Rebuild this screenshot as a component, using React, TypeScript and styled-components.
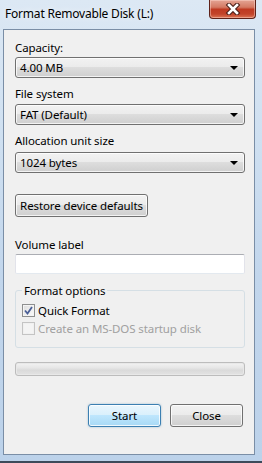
import React from "react";
import styled, { createGlobalStyle, css } from "styled-components";

const Global = createGlobalStyle`
  html, body { margin: 0; padding: 0; background: #ffffff; }
  body { font-family: "Noto Sans", "Open Sans", sans-serif; font-size: 11.5px; letter-spacing: -0.1px; color: #000; }
  * { box-sizing: border-box; }
`;

const Frame = styled.div`
  width: 262px;
  height: 463px;
  display: flex;
  flex-direction: column;
  background: linear-gradient(180deg, #dce8f4 0%, #cfe0f1 30%, #c2d6ec 60%, #bcd2ea 100%);
  border-bottom: 2px solid #3d4a5a;
  padding: 0 7px 6px 3px;
`;

const TitleBar = styled.div`
  height: 29px;
  display: flex;
  align-items: flex-start;
  justify-content: space-between;
`;

const Title = styled.div`
  padding: 6px 0 0 2px;
  font-size: 12px;
  letter-spacing: -0.2px;
  line-height: 16px;
  color: #000;
  text-shadow: 0 0 6px rgba(255,255,255,0.9);
`;

const CloseBtn = styled.div`
  width: 47px;
  height: 19px;
  margin-right: -1px;
  border: 1px solid #5e2219;
  border-top: none;
  border-radius: 0 0 4px 4px;
  background: linear-gradient(180deg, #e4a494 0%, #d47a64 40%, #bf3a22 52%, #c2442a 78%, #dc7555 100%);
  box-shadow: inset 0 0 0 1px rgba(255,220,210,0.45);
  display: flex;
  align-items: center;
  justify-content: center;
`;

const Client = styled.div`
  flex: 1;
  background: #f0f0f0;
  border: 1px solid #7a8ea6;
  display: flex;
  flex-direction: column;
  padding: 0 0 0 11px;
`;

const Label = styled.div<{ $top: number }>`
  margin-top: ${(p) => p.$top}px;
  height: 15px;
  line-height: 15px;
  color: #000;
  white-space: nowrap;
`;

const buttonFace = css`
  border: 1px solid #707070;
  border-radius: 3px;
  background: linear-gradient(180deg, #f2f2f2 0%, #ebebeb 49%, #dddddd 50%, #cfcfcf 100%);
  box-shadow: inset 0 0 0 1px rgba(255,255,255,0.75);
`;

const Combo = styled.div<{ $top: number }>`
  ${buttonFace}
  margin-top: ${(p) => p.$top}px;
  width: 230px;
  height: 21px;
  display: flex;
  align-items: center;
  justify-content: space-between;
  padding: 0 6px 0 4px;
  line-height: 15px;
`;

const Arrow = styled.span`
  width: 0;
  height: 0;
  border-left: 4px solid transparent;
  border-right: 4px solid transparent;
  border-top: 4px solid #000;
  margin-top: 1px;
`;

const Button = styled.div<{ $top?: number; $width: number; $default?: boolean }>`
  ${buttonFace}
  margin-top: ${(p) => p.$top ?? 0}px;
  width: ${(p) => p.$width}px;
  height: 23px;
  display: flex;
  align-items: center;
  justify-content: center;
  line-height: 15px;
  white-space: nowrap;
  ${(p) =>
    p.$default &&
    css`
      border-color: #3c7fb1;
      background: linear-gradient(180deg, #eaf6fd 0%, #d9f0fc 49%, #bee6fd 50%, #a7d9f5 100%);
      box-shadow: inset 0 0 0 1px rgba(255,255,255,0.8), 0 0 2px rgba(60,127,177,0.5);
    `}
`;

const TextInput = styled.div<{ $top: number }>`
  margin-top: ${(p) => p.$top}px;
  width: 230px;
  height: 20px;
  background: #fff;
  border: 1px solid #abadb3;
  border-left-color: #e2e3ea;
  border-right-color: #e2e3ea;
  border-bottom-color: #e3e9ef;
  border-radius: 2px;
`;

const Group = styled.fieldset`
  margin: 9px 0 0 0;
  width: 230px;
  height: 65px;
  border: 1px solid #d5dfe5;
  border-radius: 3px;
  padding: 0 0 0 6px;
  display: flex;
  flex-direction: column;
`;

const Legend = styled.legend`
  padding: 0 2px;
  line-height: 15px;
`;

const CheckRow = styled.div<{ $disabled?: boolean; $top: number }>`
  margin-top: ${(p) => p.$top}px;
  display: flex;
  align-items: center;
  gap: 3px;
  height: 15px;
  color: ${(p) => (p.$disabled ? "#a0a0a0" : "#000")};
`;

const Box = styled.span<{ $disabled?: boolean }>`
  width: 13px;
  height: 13px;
  border: 1px solid ${(p) => (p.$disabled ? "#c4c4c4" : "#8e8f8f")};
  background: ${(p) =>
    p.$disabled
      ? "#f4f4f4"
      : "linear-gradient(135deg, #dcdcdc 0%, #f0f0f0 60%, #fbfbfb 100%)"};
  box-shadow: inset 0 0 0 1px ${(p) => (p.$disabled ? "#f0f0f0" : "#f4f4f4")};
  display: flex;
  align-items: center;
  justify-content: center;
`;

const Progress = styled.div`
  margin-top: 14px;
  width: 230px;
  height: 14px;
  border: 1px solid #bcbcbc;
  border-radius: 3px;
  background: linear-gradient(180deg, #f3f3f3 0%, #e6e6e6 40%, #dadada 60%, #e3e3e3 100%);
  box-shadow: inset 0 0 0 1px #e8e8e8;
`;

const ButtonRow = styled.div`
  margin-top: 28px;
  width: 228px;
  display: flex;
  justify-content: flex-end;
  gap: 9px;
`;

export default function App() {
  return (
    <>
      <Global />
      <Frame>
        <TitleBar>
          <Title>Format Removable Disk (L:)</Title>
          <CloseBtn>
            <svg width="16" height="12" viewBox="0 0 16 12">
              <path
                d="M4 2 L12 10 M12 2 L4 10"
                stroke="#4a1e18"
                strokeWidth="4.6"
                strokeLinecap="square"
              />
              <path
                d="M4 2 L12 10 M12 2 L4 10"
                stroke="#ffffff"
                strokeWidth="2.6"
                strokeLinecap="square"
              />
            </svg>
          </CloseBtn>
        </TitleBar>
        <Client>
          <Label $top={10}>Capacity:</Label>
          <Combo $top={2}>
            <span>4.00 MB</span>
            <Arrow />
          </Combo>
          <Label $top={8}>File system</Label>
          <Combo $top={3}>
            <span>FAT (Default)</span>
            <Arrow />
          </Combo>
          <Label $top={8}>Allocation unit size</Label>
          <Combo $top={4}>
            <span>1024 bytes</span>
            <Arrow />
          </Combo>
          <Button $top={21} $width={133}>
            Restore device defaults
          </Button>
          <Label $top={20}>Volume label</Label>
          <TextInput $top={2} />
          <Group>
            <Legend>Format options</Legend>
            <CheckRow $top={5}>
              <Box>
                <svg width="9" height="9" viewBox="0 0 9 9">
                  <path d="M1 4.5 L3.5 7.5 L8 1" stroke="#4a5f97" strokeWidth="1.8" fill="none" />
                </svg>
              </Box>
              Quick Format
            </CheckRow>
            <CheckRow $top={3} $disabled>
              <Box $disabled />
              Create an MS-DOS startup disk
            </CheckRow>
          </Group>
          <Progress />
          <ButtonRow>
            <Button $width={73} $default>
              Start
            </Button>
            <Button $width={73}>Close</Button>
          </ButtonRow>
        </Client>
      </Frame>
    </>
  );
}
